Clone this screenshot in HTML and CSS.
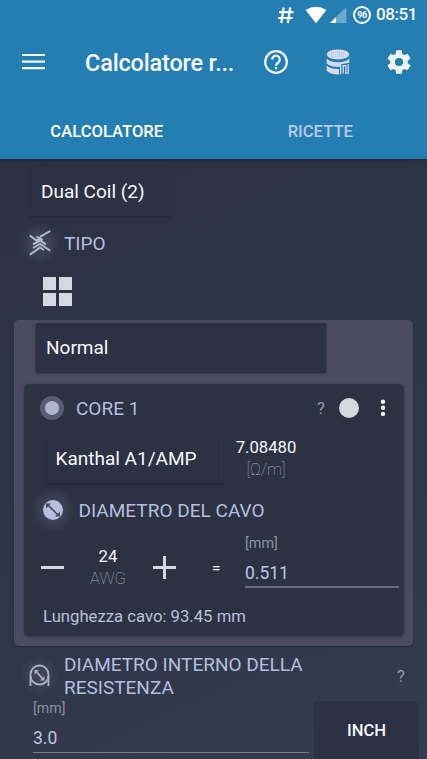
FILE: index.html
```html
<!DOCTYPE html>
<html lang="it">
<head>
<meta charset="utf-8">
<meta name="viewport" content="width=device-width, initial-scale=1">
<title>Calcolatore</title>
<link rel="stylesheet" href="styles.css">
</head>
<body>
<div class="screen">
  <header class="header">
    <div class="status">
      <svg class="hash" width="18" height="18" viewBox="0 0 18 18"><path d="M6.700 1.500 4.300 17M13.200 1.500l-2.400 15.500M2 6.200h14.500M1.200 12h14.500" fill="none" stroke="#fff" stroke-width="2.200"/></svg>
      <svg class="wifi" width="22" height="18" viewBox="0 0 22 18"><path d="M.5 4Q11-2.500 21.500 4L11 17.300Z" fill="#fff"/></svg>
      <svg class="signal" width="18" height="18" viewBox="0 0 18 18"><path d="M17.300 1v16H1Z" fill="#6ba8cb"/><path d="M7 11v6H1Z" fill="#fff"/></svg>
      <div class="battery">96</div>
      <span class="clock">08:51</span>
    </div>
    <div class="toolbar">
      <svg class="menu" width="24" height="18" viewBox="0 0 24 18"><path d="M0 2h23M0 8.700h23M0 15.100h23" stroke="#f2f6fb" stroke-width="2.200"/></svg>
      <h1 class="title">Calcolatore r...</h1>
      <svg class="help" width="26" height="26" viewBox="0 0 26 26"><circle cx="13" cy="13" r="10.800" fill="none" stroke="#f0f3f9" stroke-width="2.200"/><path d="M9.200 10.500a3.800 3.800 0 1 1 6.300 2.800c-1.600 1.300-2.500 1.700-2.500 3.400" fill="none" stroke="#f0f3f9" stroke-width="2.200"/><path d="M11.900 18h2.200v2.300h-2.200z" fill="#f0f3f9"/></svg>
      <svg class="stack" width="26" height="28" viewBox="0 0 26 28"><g fill="#d5dbe8"><ellipse cx="13" cy="6.400" rx="11.200" ry="5"/><path d="M1.700 10.500q3 3.800 11.300 3.800T24.300 10.500v4.300L16 16.200v2.300Q5 19.500 1.700 15.300Z"/><path d="M1.700 17.500q3 3.500 12.300 3.500v5.500Q4.500 26.500 1.700 22.500Z"/></g><path d="M15.700 16.800v9.400M18.200 25.600v-8h2.700v7.500h2.300v-9" fill="none" stroke="#d5dbe8" stroke-width="1.300"/><path d="M4 6.400h18M6 4.400h14M6 8.400h14" stroke="#a3bfda" stroke-width=".8" stroke-dasharray="1 1"/></svg>
      <svg class="gear" width="28" height="28" viewBox="0 0 24 24"><path fill="#eff3f8" d="M19.430 12.980c.04-.32.070-.64.070-.98s-.03-.66-.07-.98l2.110-1.650c.19-.15.240-.42.120-.64l-2-3.460c-.12-.22-.39-.3-.61-.22l-2.490 1c-.52-.4-1.080-.73-1.690-.98l-.38-2.650A.49.490 0 0 0 14 2h-4c-.25 0-.46.180-.49.420l-.38 2.650c-.61.250-1.170.59-1.690.98l-2.490-1c-.23-.09-.49 0-.61.220l-2 3.460c-.13.220-.07.490.12.640l2.110 1.650c-.04.320-.07.650-.07.980s.03.660.07.980l-2.110 1.650c-.19.150-.24.420-.12.640l2 3.460c.12.220.39.300.61.220l2.490-1c.52.400 1.080.730 1.690.980l.38 2.650c.03.240.24.420.49.420h4c.25 0 .46-.18.490-.42l.38-2.650c.61-.25 1.170-.59 1.690-.98l2.490 1c.23.090.49 0 .61-.22l2-3.460c.12-.22.070-.49-.12-.64zM12 15.500a3.500 3.500 0 1 1 0-7 3.500 3.500 0 0 1 0 7z"/></svg>
    </div>
    <nav class="tabs"><span class="tab active">CALCOLATORE</span><span class="tab">RICETTE</span></nav>
  </header>
  <main class="content">
    <div class="select coil">Dual Coil (2)</div>
    <div class="section type">
      <span class="icon"><svg width="22" height="26" viewBox="0 0 22 26"><g fill="none" stroke="#b3bad2" stroke-width="2"><path d="m.8 5.500 6.700 5 3.700-2 2.500 1.500M21.200 1 11 6.800M7.500 6.500l3.500 2.200M4 14.300l7-3.800 6 3.800M4 18l7-4 6.500 4M.8 24.700 11 17.500l4 2.500M14 15.800l7.200 5"/></g></svg></span>
      <h2 class="heading">TIPO</h2>
    </div>
    <svg class="grid-icon" width="29" height="29" viewBox="0 0 29 29"><path fill="#d4d8e1" d="M0 0h13v13H0zM16 0h13v13H16zM0 16h13v13H0zM16 16h13v13H16z"/></svg>
    <section class="panel">
      <div class="select kind">Normal</div>
      <article class="core">
        <div class="core-head">
          <span class="dot"></span>
          <h2 class="heading">CORE 1</h2>
          <span class="question">?</span>
          <span class="color"></span>
          <svg class="more" width="6" height="18" viewBox="0 0 6 18"><g fill="#eff1f8"><circle cx="3" cy="2.700" r="2.200"/><circle cx="3" cy="8.800" r="2.200"/><circle cx="3" cy="14.900" r="2.200"/></g></svg>
        </div>
        <div class="material-row">
          <div class="select material">Kanthal A1/AMP</div>
          <div class="resistance"><span class="value">7.08480</span><span class="unit">[Ω/m]</span></div>
        </div>
        <div class="section wire">
          <span class="icon"><svg width="22" height="22" viewBox="0 0 22 22"><circle cx="11" cy="11" r="10" fill="#b8bedc"/><path d="m5.500 5.500 11 11" stroke="#42475c" stroke-width="1.600"/><path d="M4 4.500h5L4 9.500zM18 17.500h-5l5-5z" fill="#42475c"/></svg></span>
          <h2 class="heading">DIAMETRO DEL CAVO</h2>
        </div>
        <div class="gauge-row">
          <svg class="minus" width="23" height="23" viewBox="0 0 23 23"><path d="M0 11.500h23" stroke="#d4d8e1" stroke-width="3"/></svg>
          <div class="gauge"><span class="value">24</span><span class="unit">AWG</span></div>
          <svg class="plus" width="23" height="23" viewBox="0 0 23 23"><path d="M0 11.500h23M11.500 0v23" stroke="#d4d8e1" stroke-width="3"/></svg>
          <span class="equals">=</span>
          <label class="field diameter"><span class="label">[mm]</span><span class="entry">0.511</span></label>
        </div>
        <p class="length">Lunghezza cavo: 93.45 mm</p>
      </article>
    </section>
    <div class="section inner">
      <span class="icon"><svg width="21" height="23" viewBox="0 0 21 23"><g fill="none" stroke="#abb1ca" stroke-width="1.800"><path d="M1.500 22V10.500a9 9 0 0 1 18 0V22"/><path d="M1.500 12a9 8.500 0 0 0 18 0M7 7.500l7 7.500" /></g><path d="M5.500 6h4.500L5.500 10.500zM15.500 16.500H11l4.500-4.500z" fill="#abb1ca"/></svg></span>
      <h2 class="heading">DIAMETRO INTERNO DELLA<br>RESISTENZA</h2>
      <span class="question">?</span>
    </div>
    <div class="inner-row">
      <label class="field inside"><span class="label">[mm]</span><span class="entry">3.0</span></label>
      <div class="inch">INCH</div>
    </div>
  </main>
</div>
</body>
</html>
```
FILE: styles.css
```css
* { box-sizing: border-box; }
body { margin: 0; background: #2c3244; }
svg { display: block; flex: none; }
h1, h2, p { margin: 0; font-weight: 400; }

.screen {
  width: 427px; height: 759px; overflow: hidden;
  display: flex; flex-direction: column;
  font-family: Roboto, "Liberation Sans", sans-serif; color: #f7f8fd;
  background: linear-gradient(155deg, #2b3041 0%, #2e3447 48%, #353b4e 100%);
}

.header { height: 159px; flex: none; background: #247eb2; box-shadow: 0 1px 3px 1px #222938; z-index: 1; }
.status { height: 29px; display: flex; align-items: center; padding-left: 277px; }
.wifi { margin-left: 10px; }
.signal { margin-left: 2px; }
.battery {
  width: 18px; height: 18px; margin-left: 6px; border: 2px solid #fff; border-radius: 50%;
  font-size: 9px; font-weight: 700; line-height: 14px; text-align: center; letter-spacing: -.3px;
}
.clock { margin-left: 5px; font-size: 17px; font-weight: 500; line-height: 29px; letter-spacing: -.4px; }
.toolbar { height: 66px; display: flex; align-items: center; padding-left: 22px; }
.title { width: 160px; margin-left: 39px; font-size: 23.500px; font-weight: 500; line-height: 30px; white-space: nowrap; letter-spacing: -.17px; padding-top: 1px; }
.help { margin-left: 18px; }
.stack { margin-left: 36px; }
.gear { margin-left: 34px; }
.tabs { height: 64px; display: grid; grid-template-columns: 1fr 1fr; padding-top: 26px; }
.tab { font-size: 16.600px; font-weight: 500; line-height: 21px; text-align: center; color: #b9c9e6; }
.active { color: #fff; }

.content { display: flex; flex-direction: column; height: 600px; }
.select { font-size: 19px; white-space: nowrap; box-shadow: 0 1px 2px #1d2230; background: #2c3143; }
.coil { width: 138px; height: 50px; margin: 7px 0 0 31px; padding-left: 10px; line-height: 51px; }
.heading { font-size: 19px; line-height: 23px; color: #b6bedf; white-space: nowrap; }
.section { display: flex; align-items: center; }
.icon { display: flex; justify-content: center; flex: none; border-radius: 50%; background: radial-gradient(closest-side, #44475c 0%, #3c4055 55%, transparent 100%); }
.type { height: 52px; padding-left: 20px; margin-top: 1px; }
.type .icon { width: 40px; padding: 7px 0; }
.type .heading { margin-left: 4px; }
.grid-icon { margin: 8px 0 0 43px; }
.panel { width: 399px; height: 326px; margin: 14px 0 0 14px; padding: 3px 9px 9px 10px; border-radius: 5px; background: #4a4b60; box-shadow: 0 1px 2px #252b3a; flex: none; }
.kind { width: 290px; height: 49px; margin-left: 12px; padding-left: 10px; line-height: 50px; }
.core { width: 380px; height: 252px; margin-top: 12px; border-radius: 5px; background: #2d3243; box-shadow: 0 1px 3px #303548; }
.core-head { display: flex; align-items: center; height: 48px; padding-left: 16px; }
.dot { width: 24px; height: 24px; border-radius: 50%; border: 5px solid #595c70; background: #afb4cf; }
.core-head .heading { width: 70px; margin-left: 12px; }
.question { color: #9298af; font-size: 16.600px; }
.core-head .question { margin-left: 171px; }
.color { width: 20px; height: 20px; border-radius: 50%; margin-left: 14px; background: #d4d8e1; }
.more { margin-left: 21px; }
.material-row { display: flex; height: 52px; }
.material { width: 176px; height: 48px; margin: 3px 0 0 23px; padding-left: 8.500px; line-height: 48px; }
.resistance, .gauge { display: flex; flex-direction: column; align-items: center; font-size: 16.700px; }
.resistance { width: 62px; margin-left: 12px; padding-top: 5px; }
.value { line-height: 21px; }
.unit { color: #a4a9bd; font-weight: 100; line-height: 24px; }
.wire { height: 52px; padding-left: 7px; }
.wire .icon { width: 44px; padding: 11px 0; }
.wire .heading { margin-left: 3.500px; letter-spacing: .02px; }
.gauge-row { display: flex; height: 62px; padding-left: 17px; }
.minus, .plus { margin-top: 20px; }
.gauge { width: 88px; padding-top: 10px; }
.plus { margin-left: 1px; }
.equals { margin: 22px 0 0 36px; width: 9px; font-size: 15px; font-weight: 500; line-height: 20px; }
.field { display: flex; flex-direction: column; }
.label { font-size: 14.200px; line-height: 18px; color: #8b90a5; }
.entry { font-size: 17.500px; line-height: 26px; color: #bdc5e0; border-bottom: 1px solid #74798d; }
.diameter { width: 154px; margin-left: 24px; }
.diameter .label { font-size: 14.400px; line-height: 16px; }
.diameter .entry { margin-top: 8px; height: 28px; border-bottom: 2px solid #666a7e; }
.length { margin: 8px 0 0 19px; font-size: 16.700px; line-height: 22px; color: #b9c0da; white-space: nowrap; }
.inner { height: 53px; padding-left: 20px; flex: none; }
.inner .icon { width: 39px; padding: 8px 0; margin-top: 6px; }
.inner .heading { width: 260px; margin-left: 5px; margin-top: 6px; }
.inner .question { margin-left: 73px; margin-top: 7px; }
.inner-row { display: flex; height: 60px; padding-left: 33px; flex: none; }
.inside { width: 276px; height: 54px; }
.inside .label { line-height: 19px; }
.inside .entry { height: 31px; line-height: 33px; margin-top: 4px; }
.inch { width: 105px; height: 60px; margin: 2px 0 0 5px; background: #2c3143; text-align: center; font-size: 16.600px; font-weight: 500; line-height: 59px; }
```
